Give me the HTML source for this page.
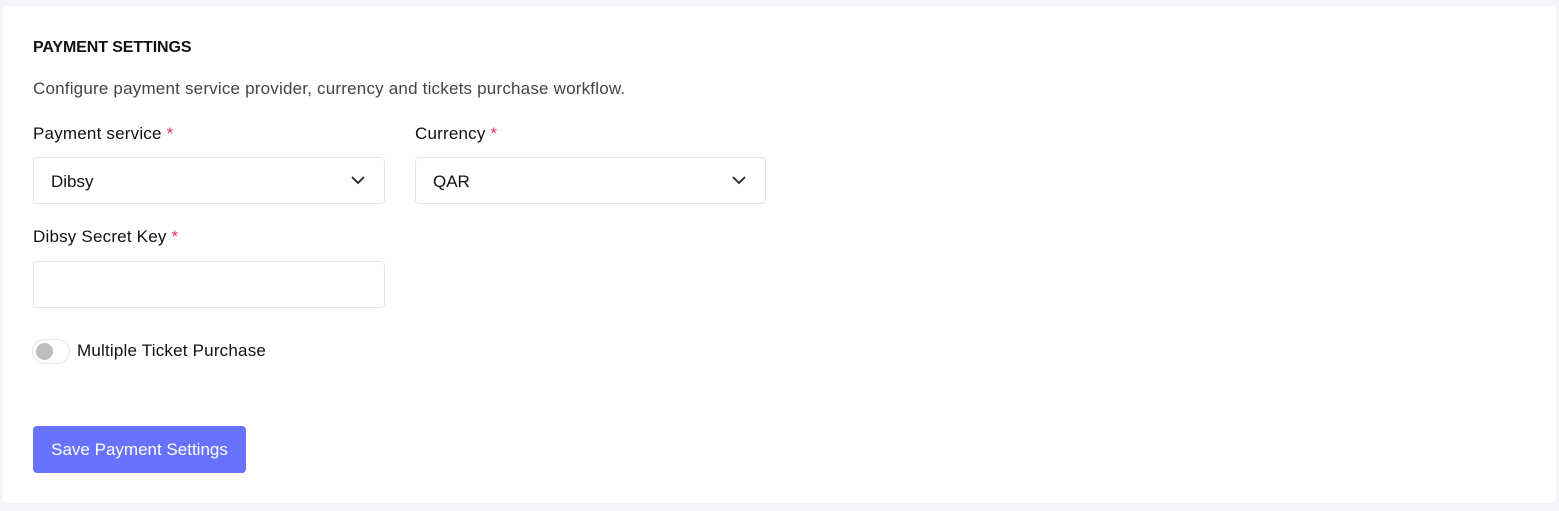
<!DOCTYPE html>
<html><head><style>
*{box-sizing:border-box;margin:0;padding:0}
body{width:1559px;height:511px;background:#f4f5f8;font-family:"Liberation Sans",sans-serif;position:relative;overflow:hidden}
.card{position:absolute;left:3px;top:6px;width:1553px;height:497px;background:#fff;border-radius:4px}
.a{position:absolute;white-space:nowrap}
.t{left:33px;top:39px;font-size:16px;font-weight:bold;color:#111;letter-spacing:-0.1px}
.d{left:33px;top:79px;font-size:17px;color:#444;letter-spacing:0.2px}
.l{font-size:17px;color:#111;letter-spacing:0.2px}
.l span{color:#e8335a}
.box{position:absolute;border:1px solid #e3e4e8;border-radius:4px;height:47px;width:352px;background:#fff}
.box .v{position:absolute;left:17px;top:14px;font-size:17px;color:#111}
.box svg{position:absolute;right:19px;top:17px}
.tg{position:absolute;left:32px;top:339px;width:38px;height:25px;border:1px solid #e6e6e6;border-radius:13px}
.tg:after{content:"";position:absolute;left:3px;top:3px;width:17px;height:17px;border-radius:50%;background:#bdbdbd}
.btn{position:absolute;left:33px;top:426px;width:213px;height:47px;background:#6772fe;border-radius:4px;color:#fff;font-size:17px;text-align:center;line-height:47px}
</style></head><body>
<div class="card"></div>
<div class="a t">PAYMENT SETTINGS</div>
<div class="a d">Configure payment service provider, currency and tickets purchase workflow.</div>
<div class="a l" style="left:33px;top:124px">Payment service <span>*</span></div>
<div class="a l" style="left:415px;top:124px">Currency <span>*</span></div>
<div class="box" style="left:33px;top:157px"><div class="v">Dibsy</div><svg width="14" height="10" viewBox="0 0 14 10"><path d="M1 2l6 6 6-6" fill="none" stroke="#222" stroke-width="1.8"/></svg></div>
<div class="box" style="left:415px;top:157px;width:351px"><div class="v">QAR</div><svg width="14" height="10" viewBox="0 0 14 10"><path d="M1 2l6 6 6-6" fill="none" stroke="#222" stroke-width="1.8"/></svg></div>
<div class="a l" style="left:33px;top:227px">Dibsy Secret Key <span>*</span></div>
<div class="box" style="left:33px;top:261px"></div>
<div class="tg"></div>
<div class="a l" style="left:77px;top:341px">Multiple Ticket Purchase</div>
<div class="btn">Save Payment Settings</div>
</body></html>
